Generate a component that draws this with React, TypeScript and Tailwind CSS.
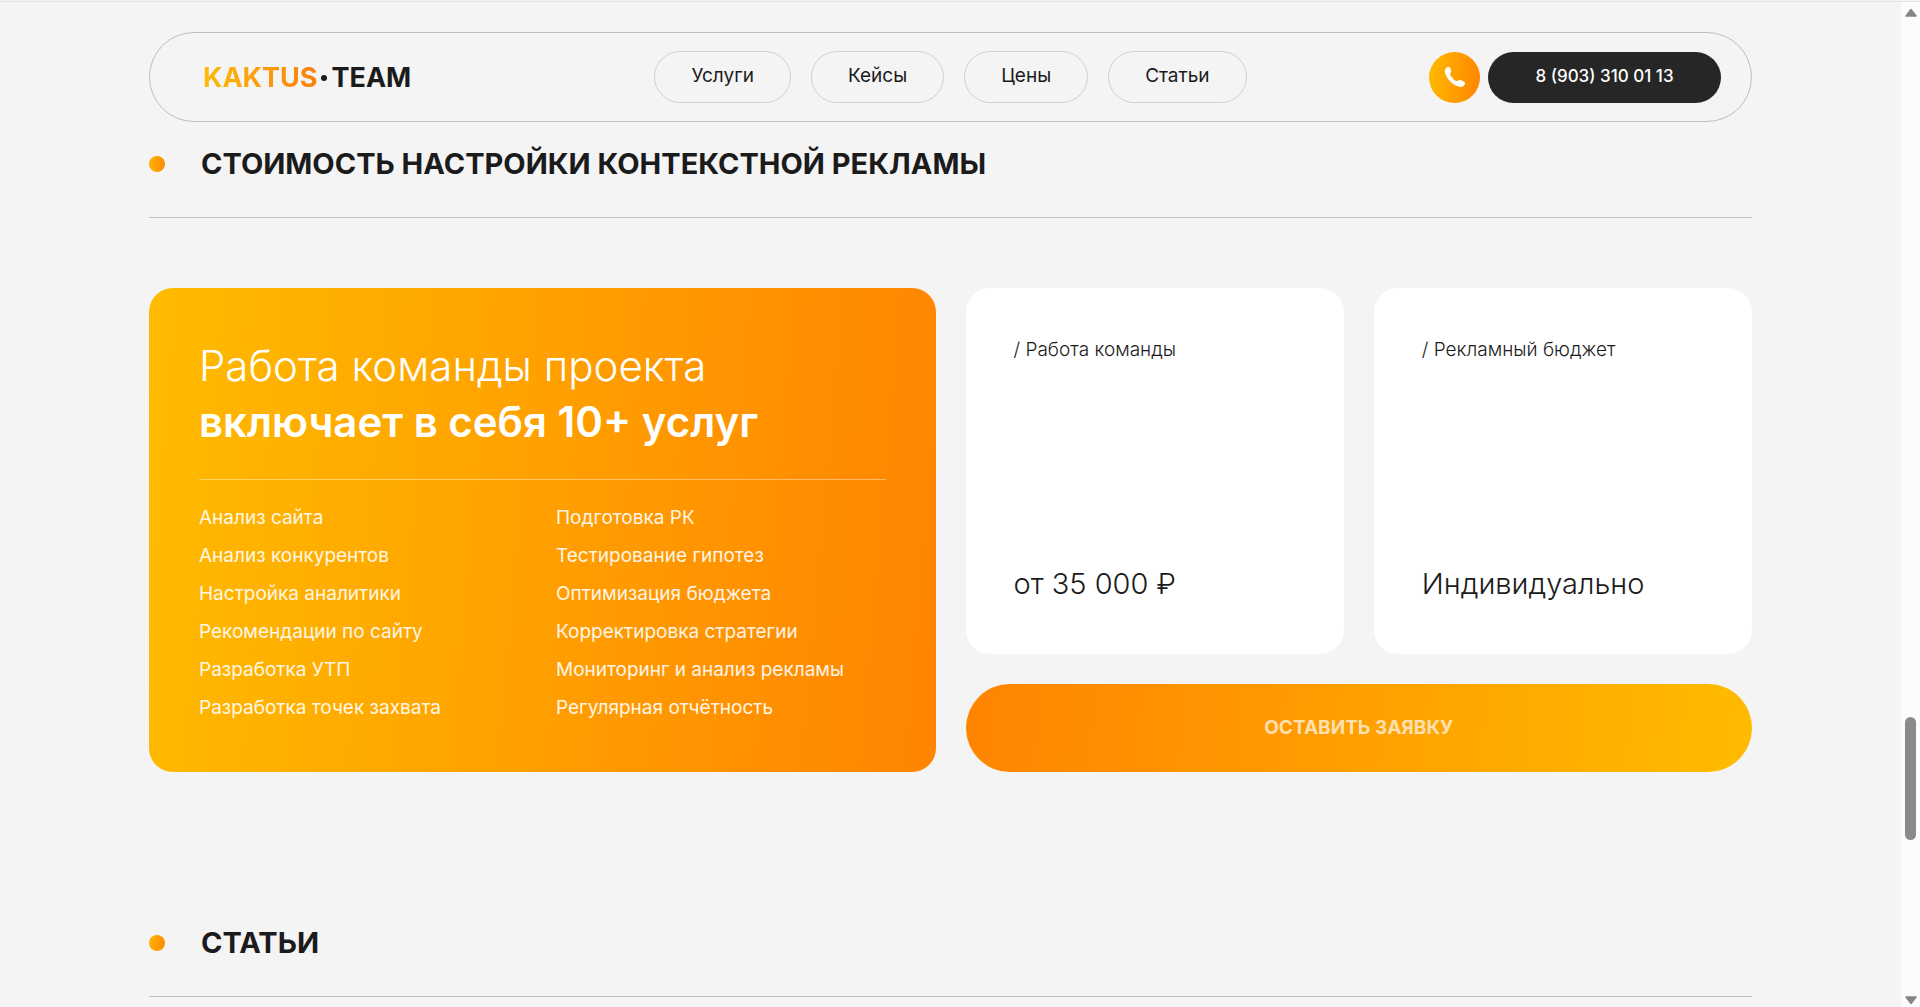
import { useState } from 'react'

const navItems = ['Услуги', 'Кейсы', 'Цены', 'Статьи']

const serviceColumns = [
  [
    'Анализ сайта',
    'Анализ конкурентов',
    'Настройка аналитики',
    'Рекомендации по сайту',
    'Разработка УТП',
    'Разработка точек захвата',
  ],
  [
    'Подготовка РК',
    'Тестирование гипотез',
    'Оптимизация бюджета',
    'Корректировка стратегии',
    'Мониторинг и анализ рекламы',
    'Регулярная отчётность',
  ],
]

const priceCards = [
  { label: 'Работа команды', value: 'от 35 000 ₽' },
  { label: 'Рекламный бюджет', value: 'Индивидуально' },
]

function Logo() {
  return (
    <a href="#" className="ml-[23px] flex items-center pt-0.5 text-[27px] leading-8 font-bold">
      <span className="bg-linear-to-r from-[#fdbb0b] to-[#f97f0c] bg-clip-text text-transparent">KAKTUS</span>
      <span className="mx-1 size-1.5 rounded-full bg-[#1b1b1b]" />
      <span className="text-[#1b1b1b]">TEAM</span>
    </a>
  )
}

function PhoneIcon() {
  return (
    <svg viewBox="0 0 22 22" className="size-[22px]" fill="#fff" aria-hidden="true">
      <path d="M1.2 3.2C1.9 1.6 4 .3 5.3.9c1 .5 1.7 2.9 1.9 4.2.2 1.3-1.2 2.1-1.1 3.1.2 1.7 4.4 6.5 6.3 6.9 1.2.2 2.1-1.4 3.5-1.1 1.5.3 4.3 1.4 4.9 2.5.9 1.6-1.6 4.6-4 4.6C10.5 21.1 1.5 12.5.9 5.6c-.1-.9 0-1.7.3-2.4z" />
    </svg>
  )
}

function Header() {
  return (
    <header className="mt-[30px] flex h-[90px] items-center justify-between rounded-full border border-[#bdbdbd] px-[30px]">
      <div className="flex flex-1">
        <Logo />
      </div>
      <nav className="flex gap-5">
        {navItems.map((item) => (
          <a
            key={item}
            href="#"
            className="flex h-[52px] items-center rounded-full border border-[#d0d0d0] px-9 pb-0.5 text-[19px] text-[#1b1b1b]"
          >
            {item}
          </a>
        ))}
      </nav>
      <div className="flex flex-1 items-center justify-end gap-2">
        <a
          href="tel:+79033100113"
          aria-label="Позвонить"
          className="flex size-[51px] items-center justify-center rounded-full bg-linear-[95deg] from-[#ffbb00] to-[#ff8400]"
        >
          <PhoneIcon />
        </a>
        <a
          href="tel:+79033100113"
          className="flex h-[51px] w-[233px] items-center justify-center rounded-full bg-[#262626] text-[17px] font-medium text-white"
        >
          8 (903) 310 01 13
        </a>
      </div>
    </header>
  )
}

function SectionTitle({ children }: { children: string }) {
  return (
    <div className="flex items-center gap-9 border-b border-[#bdbdbd] pb-[35px]">
      <span className="size-4 rounded-full bg-linear-[95deg] from-[#ffb300] to-[#ff8a00]" />
      <h2 className="text-[29px] leading-9 font-bold text-[#1b1b1b] uppercase">{children}</h2>
    </div>
  )
}

function ServicesCard() {
  return (
    <div className="rounded-3xl bg-linear-[95deg] from-[#ffbb00] to-[#ff8400] px-[50px] pt-[50px] pb-[45px] text-white">
      <h3 className="text-[42px] leading-14">
        <span className="block font-light">Работа команды проекта</span>
        <span className="block font-semibold">включает в себя 10+ услуг</span>
      </h3>
      <div className="mt-[29px] grid grid-cols-[357px_1fr] border-t border-white/40 pt-[19px]">
        {serviceColumns.map((column) => (
          <ul key={column[0]} className="text-[19px] leading-[38px] whitespace-nowrap text-white/90">
            {column.map((service) => (
              <li key={service}>{service}</li>
            ))}
          </ul>
        ))}
      </div>
    </div>
  )
}

function PriceCard({ label, value }: { label: string; value: string }) {
  return (
    <div className="flex flex-col justify-between rounded-3xl bg-white p-12 text-[#1b1b1b]">
      <p className="text-[19px] leading-7 font-light">/ {label}</p>
      <p className="text-[29px] leading-11 font-light">{value}</p>
    </div>
  )
}

function ScrollBar() {
  return (
    <div className="flex w-[19px] shrink-0 flex-col items-center bg-[#fcfcfc] pt-1.5 pb-0.5" aria-hidden="true">
      <svg viewBox="0 0 12 9" className="h-[9px] w-3">
        <path d="M6 1.5 11 8H1z" fill="#858585" stroke="#858585" strokeWidth="1.5" strokeLinejoin="round" />
      </svg>
      <span className="grow-[702]" />
      <span className="h-[123px] w-[11px] rounded-full bg-[#8a8a8a]" />
      <span className="grow-[157]" />
      <svg viewBox="0 0 12 9" className="h-[9px] w-3">
        <path d="M6 7.5 1 1h10z" fill="#858585" stroke="#858585" strokeWidth="1.5" strokeLinejoin="round" />
      </svg>
    </div>
  )
}

export default function App() {
  const [sent, setSent] = useState(false)

  return (
    <div className="h-screen bg-[#f4f4f4] pt-px font-['Inter','Open_Sans',sans-serif]">
      <div className="flex h-full overflow-hidden border-t border-[#e2e2e2]">
        <main className="min-w-0 flex-1 px-[149px]">
          <Header />

          <section className="mt-6">
            <SectionTitle>Стоимость настройки контекстной рекламы</SectionTitle>
            <div className="mt-[70px] grid grid-cols-2 gap-[30px]">
              <ServicesCard />
              <div className="flex flex-col gap-[30px]">
                <div className="grid flex-1 grid-cols-2 gap-[30px]">
                  {priceCards.map((card) => (
                    <PriceCard key={card.label} label={card.label} value={card.value} />
                  ))}
                </div>
                <button
                  type="button"
                  onClick={() => setSent(true)}
                  disabled={sent}
                  className="h-[88px] rounded-full bg-linear-[95deg] from-[#ff8400] to-[#ffbb00] text-[19px] font-bold text-white/70 uppercase"
                >
                  Оставить заявку
                </button>
              </div>
            </div>
          </section>

          <section className="mt-[153px]">
            <SectionTitle>Статьи</SectionTitle>
          </section>
        </main>
        <ScrollBar />
      </div>
    </div>
  )
}
